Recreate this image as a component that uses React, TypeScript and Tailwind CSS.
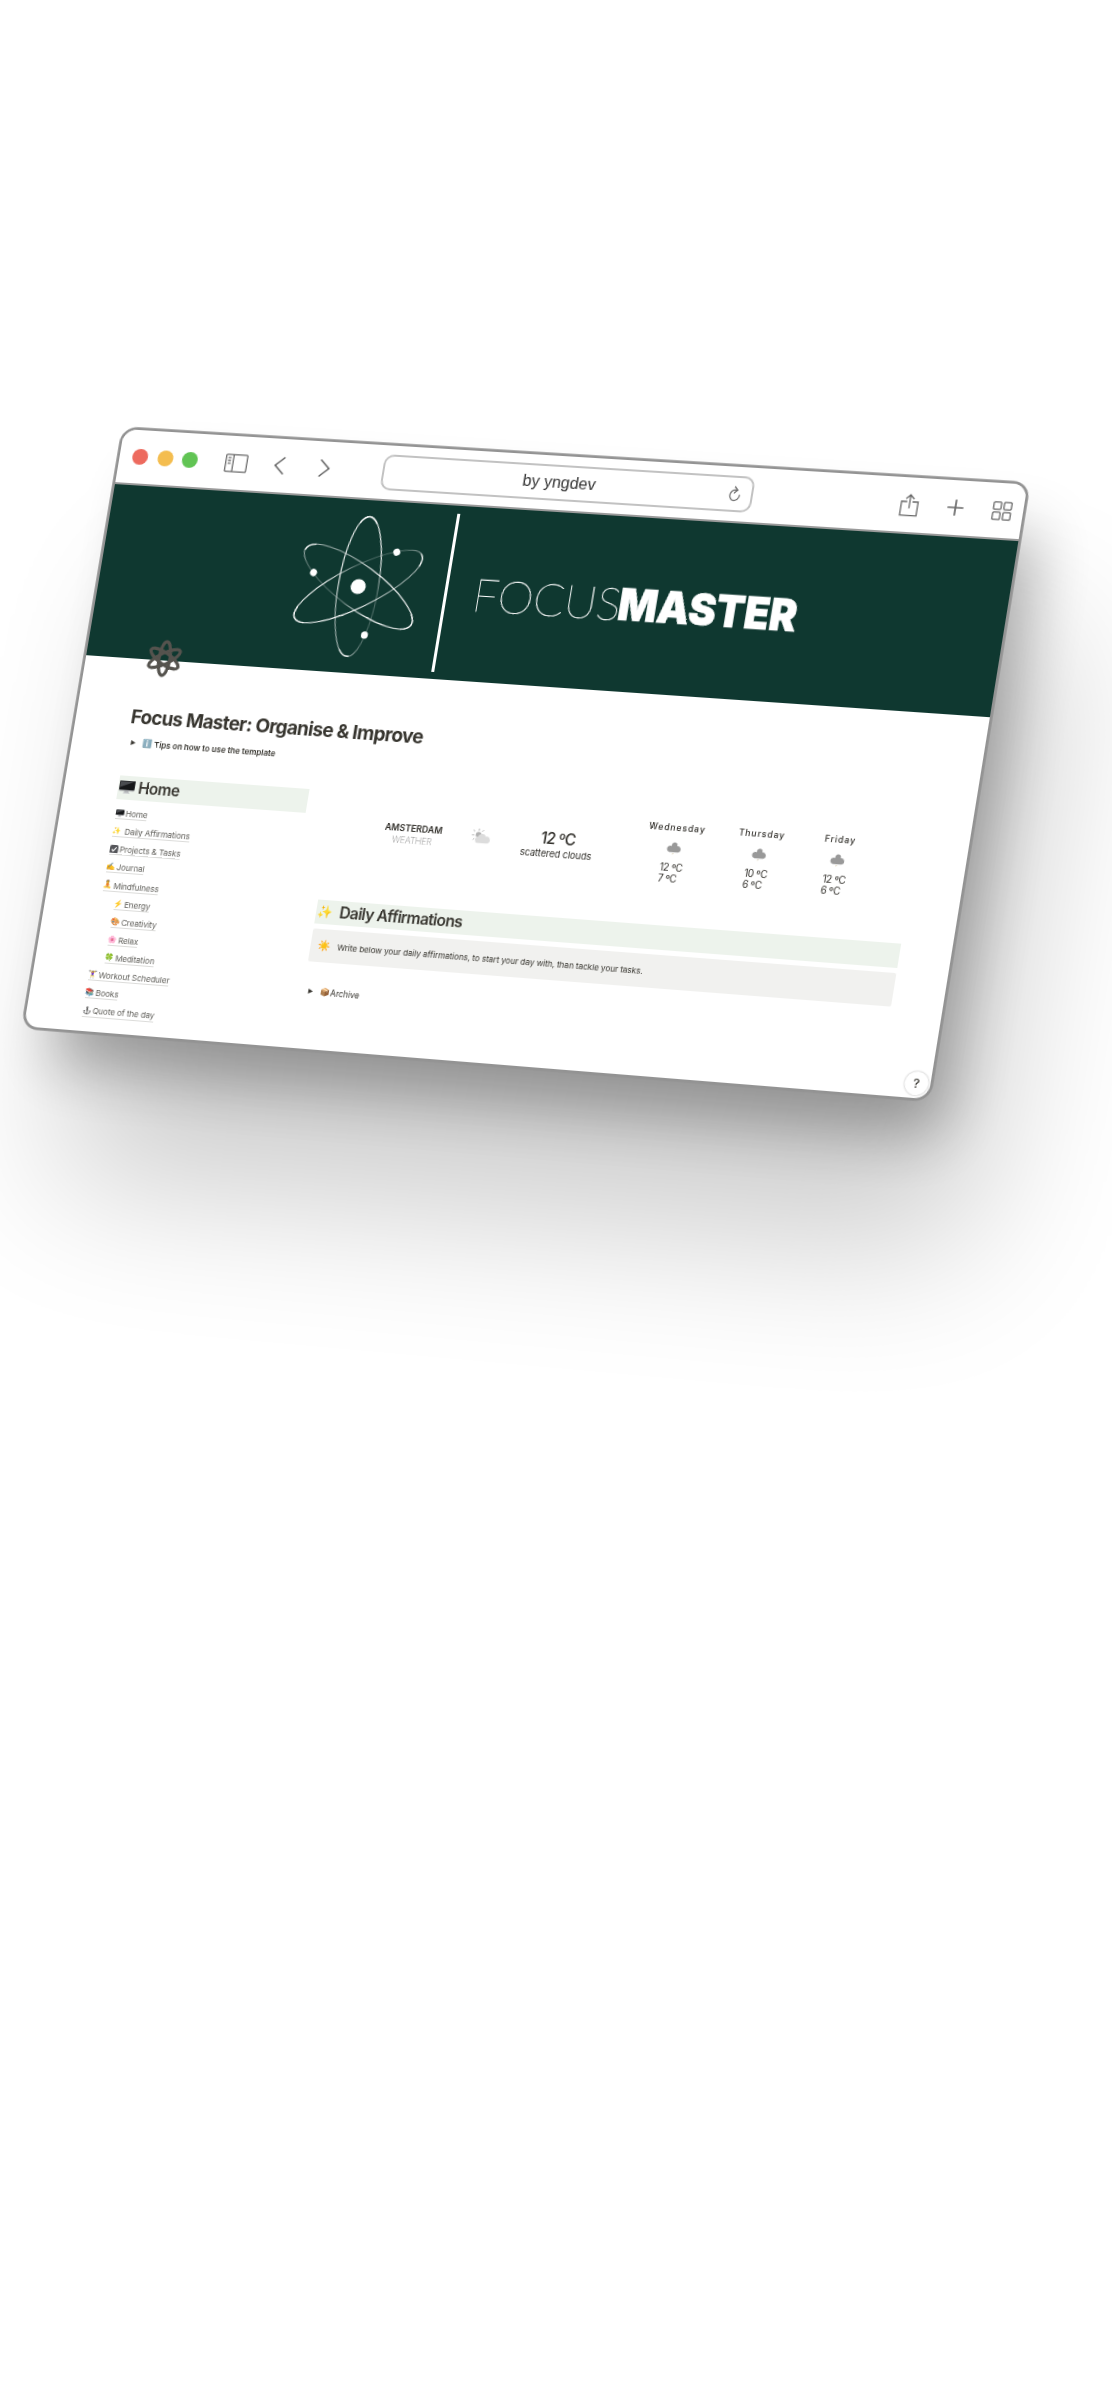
import React from "react";
import { Anchor } from "lucide-react";

function Emoji({ children, className = "" }: { children: React.ReactNode; className?: string }) {
  return (
    <span className={`inline-flex shrink-0 items-center justify-center leading-none ${className}`}>
      <span className="leading-none [font-family:'Noto_Color_Emoji','Apple_Color_Emoji',sans-serif]">{children}</span>
    </span>
  );
}

function Toolbar() {
  return (
    <header className="flex h-[56px] shrink-0 items-center border-b-2 border-[#9a9a9a] bg-white text-[#6a6a6a]">
      <div className="ml-[13px] flex gap-[9.5px]">
        <span className="size-4 rounded-full bg-[#ed6a5e]" />
        <span className="size-4 rounded-full bg-[#f4bd4f]" />
        <span className="size-4 rounded-full bg-[#61c454]" />
      </div>
      <svg className="ml-[27.5px] h-[19px] w-[23px]" viewBox="0 0 23 19" fill="none" stroke="currentColor" strokeWidth="1.3">
        <rect x="0.7" y="0.8" width="21.6" height="17.4" rx="1.2" />
        <path d="M8.2 1v17M2.8 4.2h3M2.8 7h3M2.8 9.8h3" />
      </svg>
      <svg className="ml-[27px] h-[18px] w-[11px]" viewBox="0 0 11 18" fill="none" stroke="currentColor" strokeWidth="1.7" strokeLinecap="round">
        <path d="M9.8 1 1.2 9l8.6 8" />
      </svg>
      <svg className="ml-[35px] h-[18px] w-[11px]" viewBox="0 0 11 18" fill="none" stroke="currentColor" strokeWidth="1.7" strokeLinecap="round">
        <path d="m1.2 1 8.6 8-8.6 8" />
      </svg>
      <div className="ml-[53px] flex h-[36px] w-[371px] items-center rounded-[10px] border-2 border-[#c2c2c2] pr-[10px]">
        <span className="flex-1 pl-[8px] text-center text-[16px] leading-none text-[#333] [font-family:'Liberation_Sans',sans-serif]">
          by yngdev
        </span>
        <svg className="h-[16px] w-[12px]" viewBox="0 0 12 16" fill="none" stroke="currentColor" strokeWidth="1.2" strokeLinecap="round">
          <path d="M7 4.3A4.7 5.2 0 1 0 10.7 9M5.6 1l2.8 3.3L5.4 7" />
        </svg>
      </div>
      <svg className="ml-[145px] h-[23px] w-[18px]" viewBox="0 0 18 23" fill="none" stroke="currentColor" strokeWidth="1.3" strokeLinecap="round">
        <path d="M6 8H.9v13.6h16.2V8H12M9 14V1.2M5.4 4.8 9 1.2l3.6 3.6" />
      </svg>
      <svg className="ml-[28px] size-[16px]" viewBox="0 0 16 16" stroke="currentColor" strokeWidth="1.7" strokeLinecap="round">
        <path d="M8 .8v14.4M.8 8h14.4" />
      </svg>
      <svg className="ml-[28px] size-[19px]" viewBox="0 0 19 19" fill="none" stroke="currentColor" strokeWidth="1.3">
        <rect x="0.8" y="0.8" width="7.3" height="7.3" rx="1" />
        <rect x="10.9" y="0.8" width="7.3" height="7.3" rx="1" />
        <rect x="0.8" y="10.9" width="7.3" height="7.3" rx="1" />
        <rect x="10.9" y="10.9" width="7.3" height="7.3" rx="1" />
      </svg>
    </header>
  );
}

function Banner() {
  return (
    <div className="flex h-[174px] shrink-0 items-center bg-[#0f3830]">
      <svg className="ml-[187.6px] size-[150px]" viewBox="-75 -75 150 150" fill="none">
        <defs>
          <radialGradient id="orbit" gradientUnits="userSpaceOnUse" cx="24" cy="34" r="62">
            <stop offset="0" stopColor="#fff" stopOpacity="0.2" />
            <stop offset="0.45" stopColor="#fff" stopOpacity="0.3" />
            <stop offset="1" stopColor="#fff" stopOpacity="0.95" />
          </radialGradient>
        </defs>
        <g transform="scale(0.965 1)">
          {["rotate(0)", "rotate(120)", "rotate(240)"].map((t) => (
            <g key={t} transform={t}>
              <ellipse rx="21" ry="70.5" stroke="url(#orbit)" strokeWidth="1.2" />
              <path d="M-9 -63.7Q0 -77.3 9 -63.7" stroke="#fff" strokeWidth="1.3" />
              <path d="M-9 63.7Q-4 71 2 70" stroke="#fff" strokeWidth="1.1" />
              <circle cx="14.8" cy="47.9" r="3.6" fill="#fff" />
            </g>
          ))}
        </g>
        <circle r="7.6" fill="#fff" />
      </svg>
      <span className="ml-[12.4px] h-[159px] w-[3.2px] bg-white" />
      <svg className="ml-[28px] h-[50px] w-[330px] overflow-visible" viewBox="0 0 330 50">
        <text x="-2" y="41.5" fontSize="45.3" textLength="148" lengthAdjust="spacingAndGlyphs" fill="#fff" stroke="#fff" strokeWidth="0.35" className="font-thin [font-family:Lato,sans-serif]">
          FOCUS
        </text>
        <text x="143.5" y="41.3" fontSize="44.5" textLength="177" lengthAdjust="spacingAndGlyphs" fill="#fff" stroke="#fff" strokeWidth="0.6" className="font-black [font-family:Inter,sans-serif]">
          MASTER
        </text>
      </svg>
    </div>
  );
}

const links: { icon: string; label: string; indent?: boolean; wide?: boolean }[] = [
  { icon: "🖥️", label: "Home" },
  { icon: "✨", label: "Daily Affirmations", wide: true },
  { icon: "check", label: "Projects & Tasks" },
  { icon: "✍️", label: "Journal" },
  { icon: "🧘", label: "Mindfulness" },
  { icon: "⚡", label: "Energy", indent: true },
  { icon: "🎨", label: "Creativity", indent: true },
  { icon: "🌸", label: "Relax", indent: true },
  { icon: "🍀", label: "Meditation", indent: true },
  { icon: "🏋️‍♀️", label: "Workout Scheduler" },
  { icon: "📚", label: "Books" },
  { icon: "anchor", label: "Quote of the day" },
];

function Monitor({ className }: { className: string }) {
  return (
    <svg className={className} viewBox="0 0 16 14">
      <path d="M6 10h4l.8 3H5.2z" fill="#b9bbbe" />
      <path d="M4.6 12.6h6.8v.9H4.6z" fill="#cfd1d3" />
      <rect x="0.2" y="0.4" width="15.6" height="10.4" rx="0.7" fill="#8b8d90" />
      <rect x="0.2" y="0.4" width="15.6" height="9" rx="0.7" fill="#161719" />
      <path d="M1 1.1h14L1 7z" fill="#4a4c50" />
    </svg>
  );
}

function LinkIcon({ icon }: { icon: string }) {
  if (icon === "anchor") return <Anchor className="size-[8.5px] shrink-0 text-[#444]" strokeWidth={2} />;
  if (icon === "🖥️") return <Monitor className="h-[8px] w-[8.5px] shrink-0" />;
  if (icon === "check")
    return (
      <svg className="size-[8.5px] shrink-0" viewBox="0 0 8 8" fill="none">
        <rect width="8" height="8" rx="1.6" fill="#55565a" />
        <path d="m1.9 4.2 1.5 1.6 2.8-3.7" stroke="#fff" strokeWidth="1.1" />
      </svg>
    );
  return <Emoji className="size-[8.5px] text-[7.5px]">{icon}</Emoji>;
}

function Sidebar() {
  return (
    <nav className="w-[193px]">
      <h2 className="flex h-[24px] items-center gap-[3.5px] bg-[#edf3ec] pl-[1px] text-[15.5px] font-semibold leading-none tracking-[-0.5px] text-[#37352f]">
        <Monitor className="h-[15px] w-[16px] shrink-0" />
        Home
      </h2>
      <ul className="mt-[5px] pl-[2px]">
        {links.map((l) => (
          <li key={l.label} className={`flex h-[18.15px] items-center ${l.indent ? "pl-[14px]" : ""}`}>
            <a className={`flex h-[12px] items-center border-b-[0.8px] border-[#dcdcda] text-[8.2px] leading-none tracking-[-0.09px] text-[#62615c] ${l.wide ? "gap-[3.4px]" : "gap-[1.4px]"}`}>
              <LinkIcon icon={l.icon} />
              <span className="pt-[1px]">{l.label}</span>
            </a>
          </li>
        ))}
      </ul>
    </nav>
  );
}

function Cloud() {
  return (
    <svg className="mt-[8.5px] h-[13px] w-[15px]" viewBox="0 0 15 13">
      <path d="M3.3 10.3a3.2 3.2 0 0 1-.2-6.3 3 3 0 0 1 1.8.2 2.8 2.8 0 1 1 5.3-.1 3.1 3.1 0 1 1 1.4 6.2z" fill="#999" />
      <path d="m7.2 11-.5 1.3" stroke="#c9b98f" strokeWidth="0.7" />
    </svg>
  );
}

const days = [
  { name: "Wednesday", hi: "12 ºC", lo: "7 ºC", w: "w-[84px]" },
  { name: "Thursday", hi: "10 ºC", lo: "6 ºC", w: "w-[83px]" },
  { name: "Friday", hi: "12 ºC", lo: "6 ºC", w: "w-[71px]" },
];

function Weather() {
  return (
    <section className="flex h-[109px] pl-[43.5px] text-[#2f2d28]">
      <div className="w-[80px] pt-[26px] text-center leading-[11.7px]">
        <div className="text-[8.8px] font-semibold">AMSTERDAM</div>
        <div className="text-[8.8px] font-extralight tracking-[-0.2px] text-[#8a8a8a]">WEATHER</div>
      </div>
      <div className="flex w-[56px] justify-center pt-[27.5px]">
        <svg className="h-[17px] w-[20px]" viewBox="0 0 20 17">
          <circle cx="6.8" cy="6" r="2.8" fill="#b2b2b2" />
          <path d="M6.8 0v2M1.2 1.6 2.9 3M.4 6.6h2.1M1.8 11.4l1.4-1.5M11.5 1.2 10 2.8" stroke="#aaa" strokeWidth="0.9" />
          <path d="M7 14.3a3.1 3.1 0 0 1-.6-6.1 4.3 4.3 0 0 1 8-.8 3.5 3.5 0 0 1 1.8 6.9z" fill="#dcdcdc" />
        </svg>
      </div>
      <div className="w-[97px] pt-[23.6px] text-center">
        <div className="text-[15.3px] font-medium leading-[16px] tracking-[-0.8px]">12 ºC</div>
        <div className="text-[9.3px] leading-[13px] tracking-[-0.12px]">scattered clouds</div>
      </div>
      <div className="ml-[25px] flex">
        {days.map((d) => (
          <div key={d.name} className={`flex flex-col items-center pt-[7px] ${d.w}`}>
            <div className="text-[8.5px] font-medium leading-[11px] tracking-[0.9px]">{d.name}</div>
            <Cloud />
            <div className="mt-[8px] flex w-[22.6px] flex-col text-[9.7px] leading-[10.8px] tracking-[-0.3px]">
              <span className="whitespace-nowrap">{d.hi}</span>
              <span className="whitespace-nowrap">{d.lo}</span>
            </div>
          </div>
        ))}
      </div>
    </section>
  );
}

function Triangle() {
  return (
    <svg className="h-[5px] w-[5px] shrink-0" viewBox="0 0 5 5">
      <path d="M.3 0v5L5 2.5z" fill="#37352f" />
    </svg>
  );
}

function Main() {
  return (
    <main className="ml-[27px] w-[579px] text-[#37352f]">
      <Weather />
      <h2 className="flex h-[24.5px] items-center gap-[7.5px] bg-[#edf3ec] pl-[2px] text-[15.5px] font-semibold leading-none tracking-[-0.6px]">
        <Emoji className="size-[14px] text-[12.5px]">✨</Emoji>
        Daily Affirmations
      </h2>
      <p className="mt-[4.8px] flex h-[33px] items-center gap-[7px] rounded-[2px] bg-[#f1f1ef] pl-[8px] text-[8.2px] leading-none tracking-[-0.085px]">
        <Emoji className="size-[12px] text-[10.5px]">☀️</Emoji>
        Write below your daily affirmations, to start your day with, than tackle your tasks.
      </p>
      <div className="mt-[23.5px] flex h-[12px] items-center pl-[4.5px] text-[8.3px] leading-none tracking-[-0.05px]">
        <Triangle />
        <Emoji className="ml-[8px] size-[9px] text-[8px]">📦</Emoji>
        <span className="ml-[1px]">Archive</span>
      </div>
    </main>
  );
}

export default function App() {
  return (
    <div className="h-[2400px] w-[1112px] overflow-hidden bg-white [font-family:Inter,sans-serif]">
      <div className="relative flex h-[610px] w-[908px] origin-top-left flex-col rounded-[16px] border-2 border-[#939393] bg-white [box-shadow:0_0_0_0.8px_#939393,26px_42px_60px_-10px_rgba(0,0,0,0.3),58px_145px_150px_rgba(0,0,0,0.2)] [transform:matrix3d(0.9675,0.0464,0,-0.00003084,-0.165715,0.978731,0,-0.000006516,0,0,1,0,122.6,427,0,1)]">
        <div className="flex min-h-0 flex-1 flex-col overflow-hidden rounded-[14px]">
          <Toolbar />
          <Banner />
          <div className="pl-[55px]">
            <svg className="relative -mt-[21px] ml-[6px] h-[38px] w-[38px]" viewBox="-19 -19 38 38" fill="none" stroke="#55534e" strokeWidth="3.3">
              <ellipse rx="5.6" ry="17" />
              <ellipse rx="5.6" ry="17" transform="rotate(60)" />
              <ellipse rx="5.6" ry="17" transform="rotate(120)" />
            </svg>
            <h1 className="ml-[1px] mt-[30px] text-[19px] font-bold leading-[24px] tracking-[-0.66px] text-[#37352f]">
              Focus Master: Organise &amp; Improve
            </h1>
            <div className="mt-[7.6px] flex h-[12px] items-center pl-[4.6px] text-[8.1px] font-semibold leading-none tracking-[-0.02px] text-[#37352f]">
              <Triangle />
              <Emoji className="ml-[8px] size-[9px] text-[8px]">ℹ️</Emoji>
              <span className="ml-[2.5px]">Tips on how to use the template</span>
            </div>
            <div className="mt-[27.4px] flex">
              <Sidebar />
              <Main />
            </div>
          </div>
        </div>
        <div className="absolute bottom-[3px] right-[2px] flex size-[23px] items-center justify-center rounded-full bg-white text-[12px] font-medium leading-none text-[#37352f] [box-shadow:0_0_2px_rgba(0,0,0,0.35)]">
          ?
        </div>
      </div>
    </div>
  );
}
